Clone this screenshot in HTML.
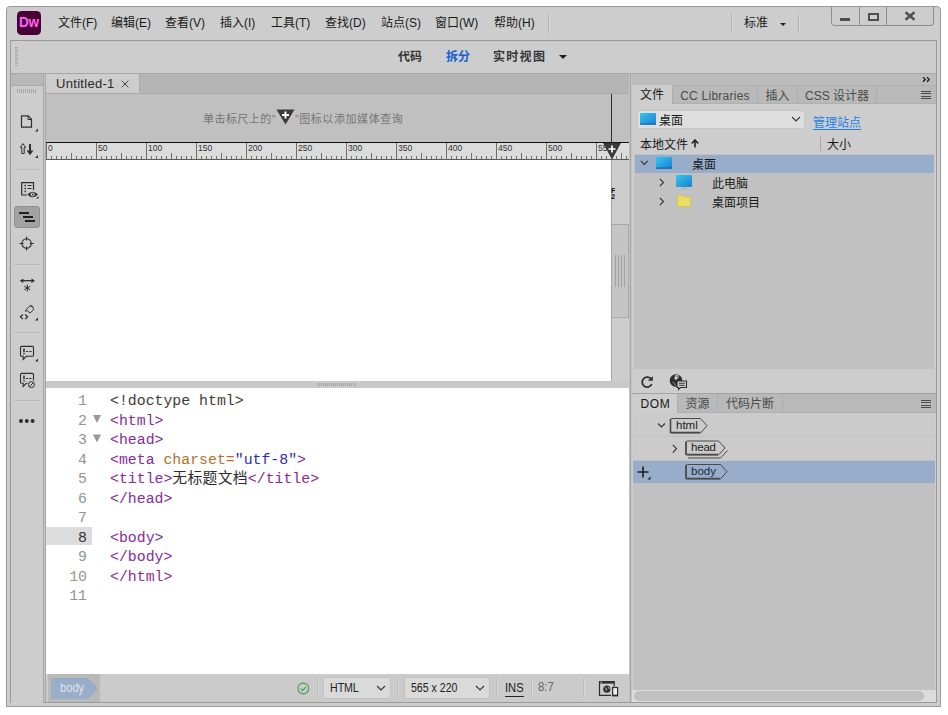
<!DOCTYPE html>
<html lang="zh-CN">
<head>
<meta charset="utf-8">
<title>Dreamweaver</title>
<style>
*{box-sizing:border-box;margin:0;padding:0}
html,body{width:948px;height:715px;overflow:hidden;background:#fff}
body{position:relative;font-family:"Liberation Sans","Noto Sans CJK SC",sans-serif;font-size:12px;color:#1a1a1a;line-height:1}
.abs{position:absolute}
.t{position:absolute;white-space:nowrap;line-height:16px;height:16px}
#win{position:absolute;left:6px;top:6px;width:935px;height:701px;background:#cdcdcd;border:1px solid #9a9a9a;border-radius:4px 4px 0 0}
#inner{position:absolute;left:10px;top:40px;width:927px;height:663px;border:1px solid #9a9a9a;background:#cdcdcd}
.vsep{position:absolute;width:1px;background:#b4b4b4;box-shadow:1px 0 0 #d6d6d6}
.hsep{position:absolute;height:1px;background:#b9b9b9}
/* menu */
.menu .t{top:15px;font-size:12px}
/* left toolbar */
#ltool{position:absolute;left:11px;top:73px;width:32px;height:629px;background:#cdcdcd}
/* tabs */
.ptab{position:absolute;top:0;height:18px;font-size:12px;line-height:20px;text-align:center;color:#4a4a4a;border-right:1px solid #adadad;white-space:nowrap}
.ptab.on{background:#cdcdcd;color:#1a1a1a}
/* code */
#code{position:absolute;left:46px;top:388px;width:583px;height:286px;background:#fff;font-family:"Liberation Mono","Noto Sans CJK SC",monospace;font-size:14.85px}
#code .ln{position:absolute;left:0;width:41px;text-align:right;color:#939393;height:19.5px;line-height:19.5px;white-space:pre}
#code .cl{position:absolute;left:64px;height:19.5px;line-height:19.5px;white-space:pre;color:#872c97}
.tg{color:#7a2f8c}.at{color:#b5702d}.st{color:#2b2bb8}.tx{color:#2c2c2c;letter-spacing:0.250px}.dc{color:#3c3c3c}
</style>
</head>
<body>
<div id="win"></div>
<div id="inner"></div>

<!-- ===== menu bar ===== -->
<div class="menu">
  <div class="abs" style="left:17px;top:11px;width:24px;height:24px;border-radius:4.5px;background:#470137"></div>
  <div class="abs" style="left:17px;top:11px;width:24px;height:24px;line-height:22px;text-align:center;color:#ff61f6;font-weight:bold;font-size:15px;letter-spacing:-0.200px;transform:scaleX(0.900);font-family:'Liberation Sans',sans-serif">Dw</div>
  <div class="t" style="left:58px">文件(F)</div>
  <div class="t" style="left:111px">编辑(E)</div>
  <div class="t" style="left:165px">查看(V)</div>
  <div class="t" style="left:220px">插入(I)</div>
  <div class="t" style="left:271px">工具(T)</div>
  <div class="t" style="left:325px">查找(D)</div>
  <div class="t" style="left:381px">站点(S)</div>
  <div class="t" style="left:435px">窗口(W)</div>
  <div class="t" style="left:494px">帮助(H)</div>
  <div class="vsep" style="left:548px;top:13px;height:20px"></div>
  <div class="vsep" style="left:731px;top:13px;height:20px"></div>
  <div class="t" style="left:744px">标准</div>
  <div class="abs" style="left:780px;top:23px;width:0;height:0;border-left:3px solid transparent;border-right:3px solid transparent;border-top:3px solid #222"></div>
  <div class="vsep" style="left:798px;top:13px;height:20px"></div>
  <!-- window controls -->
  <div class="abs" style="left:831px;top:6px;width:103px;height:20px;border:1px solid #8f8f8f;border-top:none;border-radius:0 0 4px 4px"></div>
  <div class="abs" style="left:859px;top:7px;width:1px;height:18px;background:#8f8f8f"></div>
  <div class="abs" style="left:886px;top:7px;width:1px;height:18px;background:#8f8f8f"></div>
  <div class="abs" style="left:840px;top:18px;width:10px;height:3px;background:#4e4e4e"></div>
  <div class="abs" style="left:868px;top:13px;width:11px;height:8px;border:2px solid #4e4e4e"></div>
  <svg class="abs" style="left:904px;top:11px" width="12" height="10" viewBox="0 0 12 10"><path d="M1.500 1.300L10.500 8.700M10.500 1.300L1.500 8.700" stroke="#4e4e4e" stroke-width="2.400" fill="none"/></svg>
</div>

<!-- ===== view toolbar ===== -->
<div class="abs" style="left:11px;top:73px;width:925px;height:1px;background:#a8a8a8;z-index:3"></div>
<div class="abs" style="left:15px;top:47px;width:3px;height:19px;background:repeating-linear-gradient(to bottom,#a6a6a6 0 1px,transparent 1px 2px)"></div>
<div class="t" style="left:398px;top:49px;font-family:'Liberation Sans','Noto Sans CJK SC',sans-serif;font-weight:bold;font-size:12px;color:#353535">代码</div>
<div class="t" style="left:446px;top:49px;font-family:'Liberation Sans','Noto Sans CJK SC',sans-serif;font-weight:bold;font-size:12px;color:#1560d4">拆分</div>
<div class="t" style="left:493px;top:49px;font-family:'Liberation Sans','Noto Sans CJK SC',sans-serif;font-weight:bold;font-size:12px;letter-spacing:1.300px;color:#353535">实时视图</div>
<div class="abs" style="left:559px;top:55px;width:0;height:0;border-left:4px solid transparent;border-right:4px solid transparent;border-top:4px solid #222"></div>

<!-- ===== left toolbar ===== -->
<div id="ltool"></div>
<div class="abs" style="left:11px;top:74px;width:32px;height:11px;background:#b8b8b8"></div>
<div class="abs" style="left:11px;top:85px;width:32px;height:1px;background:#a9a9a9"></div>
<div class="abs" style="left:17px;top:89px;width:20px;height:4px;background:repeating-linear-gradient(to right,#a6a6a6 0 1px,transparent 1px 2px)"></div>
<div class="abs" style="left:14px;top:169px;width:26px;height:1px;background:#bcbcb6"></div>
<div class="abs" style="left:14px;top:264px;width:26px;height:1px;background:#bcbcb6"></div>
<div class="abs" style="left:14px;top:332px;width:26px;height:1px;background:#bcbcb6"></div>
<div class="abs" style="left:14px;top:400px;width:26px;height:1px;background:#bcbcb6"></div>
<svg class="abs" style="left:11px;top:73px" width="33" height="629" viewBox="11 73 33 629" fill="none" stroke="#2e2e2e" stroke-width="1.2">
  <!-- new doc -->
  <path d="M21.5 115.800H28.200L31.500 119.200V127.200H21.500Z"/><path d="M28 116V119.500H31.500" stroke-width="1"/>
  <path d="M38 128.500V131.500H35Z" fill="#2e2e2e" stroke="none"/>
  <!-- up/down arrows -->
  <path d="M23 143.600L20.300 147.500H21.800V153.500H24.200V147.500H25.700Z" stroke-width="1"/>
  <path d="M29 144H31V150.500H33.400L30 155.200L26.600 150.500H29Z" fill="#2e2e2e" stroke="none"/>
  <path d="M38 155V158H35Z" fill="#2e2e2e" stroke="none"/>
  <!-- list + eye -->
  <path d="M33.500 190V182.700H21.700V195H27"/>
  <path d="M24.500 185.500H26M24.500 188.500H26M24.500 191.500H26" stroke-width="1.4"/>
  <path d="M27.500 185.500H31.500M27.500 188.500H31.500" stroke-width="1"/>
  <path d="M27.300 194.600Q32.600 189 38 194.600Q32.600 200 27.300 194.600Z" fill="#2e2e2e" stroke="none"/>
  <circle cx="32.600" cy="194.500" r="2.100" fill="#cdcdcd" stroke="none"/><circle cx="32.600" cy="194.500" r="0.900" fill="#2e2e2e" stroke="none"/>
  <path d="M38.500 196V198.500H36Z" fill="#2e2e2e" stroke="none"/>
  <!-- active button -->
  <rect x="14.500" y="206.500" width="25" height="21" rx="2.500" fill="#a2a2a2" stroke="#909090" stroke-width="1"/>
  <path d="M19 213H29M23 217H33M25 221H35" stroke="#1e1e1e" stroke-width="2"/>
  <!-- crosshair -->
  <circle cx="26.600" cy="243.500" r="4.700" stroke-width="1.100"/>
  <path d="M26.600 236.700V240.500M26.600 246.500V250.400M19.600 243.500H23.500M29.700 243.500H33.800" stroke-width="1.100"/>
  <!-- expand arrows -->
  <path d="M22 280.700H33" stroke-width="1.300"/>
  <path d="M19.800 280.700L23.300 278.400V283ZM35 280.700L31.500 278.400V283Z" fill="#2e2e2e" stroke="none"/>
  <path d="M27.300 284.500V291.500M24.300 286.200L30.300 289.800M30.300 286.200L24.300 289.800" stroke-width="1"/>
  <!-- tag icon -->
  <path d="M26.200 309.500L29.700 306L32.600 306.300L33.600 309.600L30 313.200Z" stroke-width="1"/>
  <path d="M30.500 304.800L32 306.800" stroke-width="1"/>
  <path d="M22.800 314.500L20.500 316.800L22.800 319.100M25.200 314.500L27.500 316.800L25.200 319.100" stroke-width="1.300"/>
  <path d="M25.300 311.500L26.300 310.500" stroke-width="1.600"/>
  <path d="M38 317.500V320.500H35Z" fill="#2e2e2e" stroke="none"/>
  <!-- comment 1 -->
  <path d="M20.500 347.500Q20.500 346.400 21.600 346.400H32.400Q33.500 346.400 33.500 347.500V355.200Q33.500 356.300 32.400 356.300H26.300L23.200 359.400V356.300H21.600Q20.500 356.300 20.500 355.200Z" stroke-width="1.100"/>
  <path d="M24 348.500V352.200M24 353.300V354.600" stroke-width="1.500"/><path d="M26 351.500H28.200M29.300 351.500H31.500" stroke-width="1.200"/>
  <path d="M38 358.500V361.500H35Z" fill="#2e2e2e" stroke="none"/>
  <!-- comment 2 -->
  <path d="M27.500 383.300H26.300L23.200 386.400V383.300H21.600Q20.500 383.300 20.500 382.200V374.500Q20.500 373.400 21.600 373.400H32.400Q33.500 373.400 33.500 374.500V380.500" stroke-width="1.100"/>
  <path d="M24 375.500V379.200M24 380.300V381.600" stroke-width="1.500"/><path d="M26 378.500H28.200M29.300 378.500H31.500" stroke-width="1.200"/>
  <circle cx="31.400" cy="384.600" r="3" stroke-width="1"/><path d="M29.300 386.700L33.500 382.500" stroke-width="1"/>
  <!-- dots -->
  <circle cx="21" cy="421" r="2" fill="#2e2e2e" stroke="none"/><circle cx="26.800" cy="421" r="2" fill="#2e2e2e" stroke="none"/><circle cx="32.600" cy="421" r="2" fill="#2e2e2e" stroke="none"/>
</svg>

<!-- ===== document area ===== -->
<div id="doc">
  <div class="abs" style="left:46px;top:73px;width:583px;height:21px;background:#b5b5b5"></div>
  <div class="abs" style="left:46px;top:93px;width:583px;height:1px;background:#a9a9a9;z-index:2"></div>
  <div class="abs" style="left:43px;top:73px;width:3px;height:629px;background:#c4c4c4;border-left:1px solid #a9a9a9;border-right:1px solid #a9a9a9"></div>
  <div class="abs" style="left:46px;top:74px;width:94px;height:19px;background:#cdcdcd;border-right:1px solid #a9a9a9"></div>
  <div class="t" style="left:56px;top:75.600px;font-size:13px;letter-spacing:0.300px;color:#2b2b2b">Untitled-1</div>
  <svg class="abs" style="left:121px;top:80px" width="8" height="8" viewBox="0 0 8 8"><path d="M0.700 0.700L7.300 7.300M7.300 0.700L0.700 7.300" stroke="#444" stroke-width="1" fill="none"/></svg>
  <div class="abs" style="left:46px;top:94px;width:583px;height:48px;background:#c0c0c0"></div>
  <div class="t" style="left:203px;top:110.500px;font-size:11px;letter-spacing:0.450px;color:#757575">单击标尺上的”</div>
  <svg class="abs" style="left:275.500px;top:109px" width="19" height="16" viewBox="0 0 19 16"><path d="M0.5 0.5H18.5L9.5 15.5Z" fill="#3a3a3a"/><path d="M9.5 2.5V9.5M6 6H13" stroke="#fff" stroke-width="2" fill="none"/></svg>
  <div class="t" style="left:295px;top:110.500px;font-size:11px;letter-spacing:0.570px;color:#757575">”图标以添加媒体查询</div>
  <div class="abs" style="left:46px;top:142px;width:583px;height:1px;background:#111"></div>
  <svg class="abs" style="left:46px;top:143px" width="583" height="17" viewBox="0 0 583 17"><rect width="583" height="16" fill="#dcdcdc"/><path d="M0.5 0V16M5.5 13V16M10.5 13V16M15.5 13V16M20.5 13V16M25.5 10V16M30.5 13V16M35.5 13V16M40.5 13V16M45.5 13V16M50.5 0V16M55.5 13V16M60.5 13V16M65.5 13V16M70.5 13V16M75.5 10V16M80.5 13V16M85.5 13V16M90.5 13V16M95.5 13V16M100.5 0V16M105.5 13V16M110.5 13V16M115.5 13V16M120.5 13V16M125.5 10V16M130.5 13V16M135.5 13V16M140.5 13V16M145.5 13V16M150.5 0V16M155.5 13V16M160.5 13V16M165.5 13V16M170.5 13V16M175.5 10V16M180.5 13V16M185.5 13V16M190.5 13V16M195.5 13V16M200.5 0V16M205.5 13V16M210.5 13V16M215.5 13V16M220.5 13V16M225.5 10V16M230.5 13V16M235.5 13V16M240.5 13V16M245.5 13V16M250.5 0V16M255.5 13V16M260.5 13V16M265.5 13V16M270.5 13V16M275.5 10V16M280.5 13V16M285.5 13V16M290.5 13V16M295.5 13V16M300.5 0V16M305.5 13V16M310.5 13V16M315.5 13V16M320.5 13V16M325.5 10V16M330.5 13V16M335.5 13V16M340.5 13V16M345.5 13V16M350.5 0V16M355.5 13V16M360.5 13V16M365.5 13V16M370.5 13V16M375.5 10V16M380.5 13V16M385.5 13V16M390.5 13V16M395.5 13V16M400.5 0V16M405.5 13V16M410.5 13V16M415.5 13V16M420.5 13V16M425.5 10V16M430.5 13V16M435.5 13V16M440.5 13V16M445.5 13V16M450.5 0V16M455.5 13V16M460.5 13V16M465.5 13V16M470.5 13V16M475.5 10V16M480.5 13V16M485.5 13V16M490.5 13V16M495.5 13V16M500.5 0V16M505.5 13V16M510.5 13V16M515.5 13V16M520.5 13V16M525.5 10V16M530.5 13V16M535.5 13V16M540.5 13V16M545.5 13V16M550.5 0V16M555.5 13V16M560.5 13V16M565.5 13V16M570.5 13V16M575.5 10V16M580.5 13V16" stroke="#6e6e6e" stroke-width="1" fill="none"/><rect y="16" width="583" height="1" fill="#5a5a5a"/><g font-family="Liberation Sans, sans-serif" font-size="8.5" fill="#333"><text x="2" y="8">0</text><text x="52" y="8">50</text><text x="102" y="8">100</text><text x="152" y="8">150</text><text x="202" y="8">200</text><text x="252" y="8">250</text><text x="302" y="8">300</text><text x="352" y="8">350</text><text x="402" y="8">400</text><text x="452" y="8">450</text><text x="502" y="8">500</text><text x="552" y="8">550</text></g></svg>
  <div class="abs" style="left:611px;top:94px;width:1px;height:50px;background:#333"></div>
  <svg class="abs" style="left:603px;top:143px" width="18" height="17" viewBox="0 0 18 17"><path d="M0 0H18L9 16.5Z" fill="#3a3a3a"/><path d="M9 2.500V9.500M5.500 6H12.500" stroke="#fff" stroke-width="1.700" fill="none"/></svg>
  <div class="abs" style="left:46px;top:160px;width:565px;height:221px;background:#fff"></div>
  <div class="abs" style="left:611px;top:160px;width:18px;height:221px;background:#cdcdcd;border-left:1px solid #a5a5a5"></div>
  <div class="abs" style="left:611px;top:188px;width:3.500px;height:13px;overflow:hidden;font-size:7.500px;line-height:6px;font-weight:bold;color:#111">F<br>2</div>
  <div class="abs" style="left:612px;top:224px;width:17px;height:94px;background:#c5c5c5;border:1px solid #a9a9a9;border-left:none"></div>
  <div class="abs" style="left:615px;top:255px;width:10px;height:32px;background:repeating-linear-gradient(to right,#a2a2a2 0 1px,transparent 1px 3px)"></div>
  <div class="abs" style="left:46px;top:381px;width:583px;height:7px;background:#c8c8c8"></div>
  <div class="abs" style="left:317px;top:383px;width:39px;height:3px;background:repeating-linear-gradient(to right,#a6a6a6 0 1px,transparent 1px 2px)"></div>
</div>

<!-- ===== code ===== -->
<div id="code">
  <div class="abs" style="left:0;top:139px;width:46px;height:17.500px;background:#dcdcdc"></div>
  <div class="ln" style="top:4.4px">1</div><div class="cl" style="top:4.4px"><span class="dc">&lt;!doctype html&gt;</span></div>
  <div class="ln" style="top:23.9px">2</div><div class="cl" style="top:23.9px">&lt;html&gt;</div>
  <div class="ln" style="top:43.4px">3</div><div class="cl" style="top:43.4px">&lt;head&gt;</div>
  <div class="ln" style="top:62.9px">4</div><div class="cl" style="top:62.9px">&lt;meta <span class="at">charset=</span><span class="st">"utf-8"</span>&gt;</div>
  <div class="ln" style="top:82.4px">5</div><div class="cl" style="top:82.4px">&lt;title&gt;<span class="tx">无标题文档</span>&lt;/title&gt;</div>
  <div class="ln" style="top:101.9px">6</div><div class="cl" style="top:101.9px">&lt;/head&gt;</div>
  <div class="ln" style="top:121.4px">7</div><div class="cl" style="top:121.4px"></div>
  <div class="ln" style="top:140.9px;color:#333">8</div><div class="cl" style="top:140.9px">&lt;body&gt;</div>
  <div class="ln" style="top:160.4px">9</div><div class="cl" style="top:160.4px">&lt;/body&gt;</div>
  <div class="ln" style="top:179.9px">10</div><div class="cl" style="top:179.9px">&lt;/html&gt;</div>
  <div class="ln" style="top:199.4px">11</div><div class="cl" style="top:199.4px"></div>
  <svg class="abs" style="left:46px;top:26px" width="10" height="30" viewBox="0 0 10 30"><path d="M1 1H9L5 9ZM1 20.500H9L5 28.500Z" fill="#979797"/></svg>
</div>

<!-- ===== status ===== -->
<div id="status">
  <div class="abs" style="left:46px;top:674px;width:583px;height:28px;background:#cbcbcb"></div>
  <div class="abs" style="left:48px;top:674px;width:52px;height:28px;background:#b9bab5"></div>
  <div class="abs" style="left:11px;top:702px;width:32px;height:1px;background:#cdcdcd"></div>
  <svg class="abs" style="left:51px;top:678px" width="48" height="21" viewBox="0 0 48 21"><path d="M0 0H37L47 10.500L37 21H0Z" fill="#97adca"/></svg>
  <div class="t" style="left:59.500px;top:680px;font-size:12px;color:#dde3ec;transform:scaleX(0.930);transform-origin:0 50%">body</div>
  <svg class="abs" style="left:296px;top:681px" width="15" height="15" viewBox="0 0 15 15"><circle cx="7.300" cy="7.500" r="5.400" fill="none" stroke="#3fa24a" stroke-width="1.100"/><path d="M4.600 7.700L6.600 9.700L10.100 5.600" fill="none" stroke="#3fa24a" stroke-width="1.100"/></svg>
  <div class="vsep" style="left:317px;top:678px;height:20px;background:#bdbdbd"></div>
  <div class="abs" style="left:323px;top:677px;width:68px;height:22px;background:#dadada;border:1px solid #c2c2c2;border-radius:3px"></div>
  <div class="t" style="left:330px;top:680px;font-size:12px;color:#222;transform:scaleX(0.880);transform-origin:0 50%">HTML</div>
  <svg class="abs" style="left:376px;top:685px" width="10" height="6" viewBox="0 0 10 6"><path d="M1 1L5 5L9 1" fill="none" stroke="#333" stroke-width="1.100"/></svg>
  <div class="vsep" style="left:397px;top:678px;height:20px;background:#bdbdbd"></div>
  <div class="abs" style="left:404px;top:677px;width:86px;height:22px;background:#dadada;border:1px solid #c2c2c2;border-radius:3px"></div>
  <div class="t" style="left:411px;top:680px;font-size:12px;color:#222;transform:scaleX(0.880);transform-origin:0 50%">565 x 220</div>
  <svg class="abs" style="left:475px;top:685px" width="10" height="6" viewBox="0 0 10 6"><path d="M1 1L5 5L9 1" fill="none" stroke="#333" stroke-width="1.100"/></svg>
  <div class="vsep" style="left:496px;top:678px;height:20px;background:#bdbdbd"></div>
  <div class="t" style="left:505px;top:680px;font-size:12px;color:#222;transform:scaleX(0.930);transform-origin:0 50%">INS</div>
  <div class="abs" style="left:505px;top:696px;width:19px;height:1px;background:#222"></div>
  <div class="vsep" style="left:531px;top:678px;height:20px;background:#bdbdbd"></div>
  <div class="t" style="left:538px;top:679px;font-size:12px;color:#666;transform:scaleX(0.950);transform-origin:0 50%">8:7</div>
  <div class="vsep" style="left:583px;top:678px;height:20px;background:#bdbdbd"></div>
  <svg class="abs" style="left:598px;top:680px" width="21" height="18" viewBox="598 680 21 18" fill="none" stroke="#2e2e2e"><path d="M611 695.300H599.500V681.500H614.200V686.500" stroke-width="1.200"/><path d="M599.500 682.500H614.200" stroke-width="2.200"/><path d="M600.500 682.300H602" stroke="#eee" stroke-width="0.800"/><circle cx="606.800" cy="689.200" r="3.600" fill="#2e2e2e" stroke="none"/><path d="M604.800 687.500L606.500 688.800L606 690.800M608 687L609.500 689" stroke="#cfcfcf" stroke-width="0.900"/><rect x="612.600" y="687.500" width="5" height="8.300" fill="#eee" stroke-width="1.200"/><path d="M612.600 695.300H617.600" stroke-width="1.400"/></svg>
</div>

<!-- ===== right panel ===== -->
<div id="rpanel">
  <div class="abs" style="left:629px;top:74px;width:3px;height:628px;background:#a8a8a8;border-left:1px solid #c2c2bc;border-right:1px solid #c4c4c4"></div>
  <div class="abs" style="left:632px;top:74px;width:304px;height:628px;background:#cdcdcd"></div>
  <!-- top strip -->
  <div class="abs" style="left:632px;top:74px;width:304px;height:11px;background:#bcbcbc"></div>
  <svg class="abs" style="left:922px;top:76px" width="9" height="7" viewBox="0 0 9 7"><path d="M1 1.200L3.300 3.500L1 5.800M5 1.200L7.300 3.500L5 5.800" fill="none" stroke="#1e1e1e" stroke-width="1.300"/></svg>
  <!-- files tabs -->
  <div class="abs" style="left:632px;top:85px;width:304px;height:19px;background:#b9b9b9;border-top:1px solid #b0b0b0;border-bottom:1px solid #b0b0b0"></div>
  <div class="abs" style="left:632px;top:85px;width:304px;height:19px">
    <div class="ptab on" style="left:0;width:41px;height:19px">文件</div>
    <div class="ptab" style="left:41px;width:85px;top:1px;letter-spacing:0.250px">CC Libraries</div>
    <div class="ptab" style="left:126px;width:40px;top:1px">插入</div>
    <div class="ptab" style="left:166px;width:79px;top:1px">CSS 设计器</div>
  </div>
  <svg class="abs" style="left:921px;top:91px" width="10" height="9" viewBox="0 0 10 9"><path d="M0 0.500H10M0 2.830H10M0 5.170H10M0 7.500H10" stroke="#4a4a4a" stroke-width="1" fill="none" shape-rendering="crispEdges"/></svg>
  <!-- site dropdown -->
  <div class="abs" style="left:637px;top:110px;width:168px;height:19px;background:#dedede;border:1px solid #c6c6c6;border-radius:3px"></div>
  <svg class="abs" style="left:640px;top:113px" width="16" height="12" viewBox="0 0 16 12"><defs><linearGradient id="gb" x1="0" y1="0" x2="1" y2="1"><stop offset="0" stop-color="#35c6ee"/><stop offset="1" stop-color="#1a7fd2"/></linearGradient></defs><rect width="16" height="11.500" rx="1" fill="url(#gb)"/><rect y="10.500" width="16" height="1.200" fill="#1463b4"/></svg>
  <div class="t" style="left:659px;top:113px">桌面</div>
  <svg class="abs" style="left:791px;top:116px" width="10" height="6" viewBox="0 0 10 6"><path d="M1 1L5 5L9 1" fill="none" stroke="#333" stroke-width="1.100"/></svg>
  <div class="t" style="left:813px;top:115px;color:#2680eb;text-decoration:underline;text-underline-offset:2px">管理站点</div>
  <!-- header -->
  <div class="t" style="left:640px;top:137px">本地文件</div>
  <svg class="abs" style="left:691px;top:139px" width="8" height="9" viewBox="0 0 8 9"><path d="M4 1.500V8.500" stroke="#222" stroke-width="1.600" fill="none"/><path d="M0.800 4.500L4 1L7.200 4.500" stroke="#222" stroke-width="1.600" fill="none"/></svg>
  <div class="abs" style="left:820px;top:136px;width:1px;height:15px;background:#a8a8a8"></div>
  <div class="t" style="left:827px;top:137px">大小</div>
  <!-- file list -->
  <div class="abs" style="left:634px;top:154px;width:300px;height:215px;background:#c1c1c1;border-radius:0 0 0 2px"></div>
  <div class="abs" style="left:635px;top:155px;width:299px;height:18px;background:#97adca"></div>
  <svg class="abs" style="left:640px;top:160px" width="9" height="6" viewBox="0 0 9 6"><path d="M0.800 0.800L4.300 4.500L7.800 0.800" fill="none" stroke="#333" stroke-width="1.100"/></svg>
  <svg class="abs" style="left:656px;top:157px" width="16" height="12" viewBox="0 0 16 12"><rect width="16" height="11.500" rx="1" fill="url(#gb)"/><rect y="10.500" width="16" height="1.200" fill="#1463b4"/></svg>
  <div class="t" style="left:692px;top:157px">桌面</div>
  <svg class="abs" style="left:659px;top:178px" width="6" height="9" viewBox="0 0 6 9"><path d="M0.800 0.800L4.500 4.500L0.800 8.200" fill="none" stroke="#333" stroke-width="1.100"/></svg>
  <svg class="abs" style="left:676px;top:175px" width="16" height="16" viewBox="0 0 16 16"><rect width="16" height="12" rx="1.200" fill="url(#gb)"/><rect x="7" y="12" width="2" height="2" fill="#9fb3c4"/><rect x="4" y="14" width="8" height="1" fill="#b0bcc6"/></svg>
  <div class="t" style="left:712px;top:176px">此电脑</div>
  <svg class="abs" style="left:659px;top:197px" width="6" height="9" viewBox="0 0 6 9"><path d="M0.800 0.800L4.500 4.500L0.800 8.200" fill="none" stroke="#333" stroke-width="1.100"/></svg>
  <svg class="abs" style="left:677px;top:195px" width="14" height="12" viewBox="0 0 14 12"><path d="M0.500 1.500Q0.500 0.500 1.500 0.500H6L7.500 2H12.500Q13.500 2 13.500 3V10.500Q13.500 11.500 12.500 11.500H1.500Q0.500 11.500 0.500 10.500Z" fill="#eadf62" stroke="#cfc34f" stroke-width="0.800"/></svg>
  <div class="t" style="left:712px;top:195px">桌面项目</div>
  <!-- files footer -->
  <svg class="abs" style="left:640px;top:375px" width="14" height="14" viewBox="0 0 14 14"><path d="M11.300 4.300A5 5 0 1 0 11.800 9" fill="none" stroke="#2e2e2e" stroke-width="1.800"/><path d="M12.800 1V5.800H8Z" fill="#2e2e2e"/></svg>
  <svg class="abs" style="left:669px;top:373px" width="19" height="18" viewBox="0 0 19 18"><circle cx="7" cy="7.500" r="6.300" fill="#2e2e2e"/><path d="M6.300 2.300L8.800 1.800L9.800 3.800L8.300 6L6.300 7L5.300 5.500Z" fill="#cdcdcd" stroke="none"/><path d="M7.800 2.800L8.600 4.200" stroke="#2e2e2e" stroke-width="0.900" fill="none"/><path d="M3.500 9L5.500 10.500L6.500 12.800" stroke="#9a9a9a" stroke-width="0.900" fill="none"/><path d="M8 8H17.500V14.500H11.500L9.500 16.500V14.500H8Z" fill="#cdcdcd" stroke="#2e2e2e" stroke-width="1.100"/><path d="M10 10.300H15.800M10 12.300H15.800" stroke="#2e2e2e" stroke-width="0.900"/></svg>
  <!-- DOM panel -->
  <div class="abs" style="left:632px;top:393px;width:304px;height:1px;background:#a4a4a4"></div>
  <div class="abs" style="left:632px;top:394px;width:304px;height:19px;background:#b9b9b9;border-bottom:1px solid #b0b0b0"></div>
  <div class="abs" style="left:632px;top:394px;width:304px;height:19px">
    <div class="ptab on" style="left:0;width:46px;height:19px;letter-spacing:0.700px;padding-left:2px">DOM</div>
    <div class="ptab" style="left:46px;width:40px">资源</div>
    <div class="ptab" style="left:86px;width:65px">代码片断</div>
  </div>
  <svg class="abs" style="left:921px;top:400px" width="10" height="9" viewBox="0 0 10 9"><path d="M0 0.500H10M0 2.830H10M0 5.170H10M0 7.500H10" stroke="#4a4a4a" stroke-width="1" fill="none" shape-rendering="crispEdges"/></svg>
  <div class="abs" style="left:633px;top:413px;width:302px;height:277px;background:#c1c1c1"></div>
  <div class="abs" style="left:633px;top:413px;width:302px;height:24px;background:#cbcbcb;border-bottom:1px solid #c2c2c2"></div>
  <div class="abs" style="left:633px;top:437px;width:302px;height:24px;background:#cbcbcb;border-bottom:1px solid #c2c2c2"></div>
  <div class="abs" style="left:633px;top:461px;width:302px;height:22px;background:#97adca"></div>
  <svg class="abs" style="left:632px;top:413px" width="304" height="72" viewBox="632 413 304 72" fill="none" stroke="#4a4a4a" stroke-width="1">
    <path d="M658 423.500L661.500 427L665 423.500" stroke="#333" stroke-width="1.100"/>
    <path d="M672 418.500H700.500L707 425.700L700.500 433H672Q670.500 433 670.500 431.500V420Q670.500 418.500 672 418.500Z"/>
    <path d="M670.500 419V432.500H700" stroke-width="1.600"/>
    <path d="M672.800 444.800L676.500 448.700L672.800 452.600" stroke="#333" stroke-width="1.100"/>
    <path d="M687.500 441H718.500L725 448L718.500 455H687.500Q686 455 686 453.500V442.500Q686 441 687.500 441Z"/>
    <path d="M686 441.500V454.500H718" stroke-width="1.600"/>
    <path d="M688 458H720.500L727.500 450.500" />
    <path d="M687.500 464.500H720.500L727 471.700L720.500 479H687.500Q686 479 686 477.500V466Q686 464.500 687.500 464.500Z"/>
    <path d="M686 465V478.500H720" stroke-width="1.600"/>
    <path d="M643 466.500V477.500M637.500 472H648.500" stroke="#1e1e1e" stroke-width="1.600"/>
    <path d="M650.500 476.500V479.500H647.500Z" fill="#1e1e1e" stroke="none"/>
  </svg>
  <div class="t" style="left:676px;top:417px;font-size:11.500px;color:#222">html</div>
  <div class="t" style="left:691px;top:439.300px;font-size:11.500px;letter-spacing:-0.200px;color:#222">head</div>
  <div class="t" style="left:691px;top:463px;font-size:11.500px;color:#1e2a3a">body</div>
  <!-- h scrollbar -->
  <div class="abs" style="left:632px;top:690px;width:304px;height:12px;background:#dcdcdc"></div>
  <div class="abs" style="left:634px;top:691px;width:290px;height:10px;background:#c1c1c1;border-radius:5px"></div>
</div>

</body>
</html>
